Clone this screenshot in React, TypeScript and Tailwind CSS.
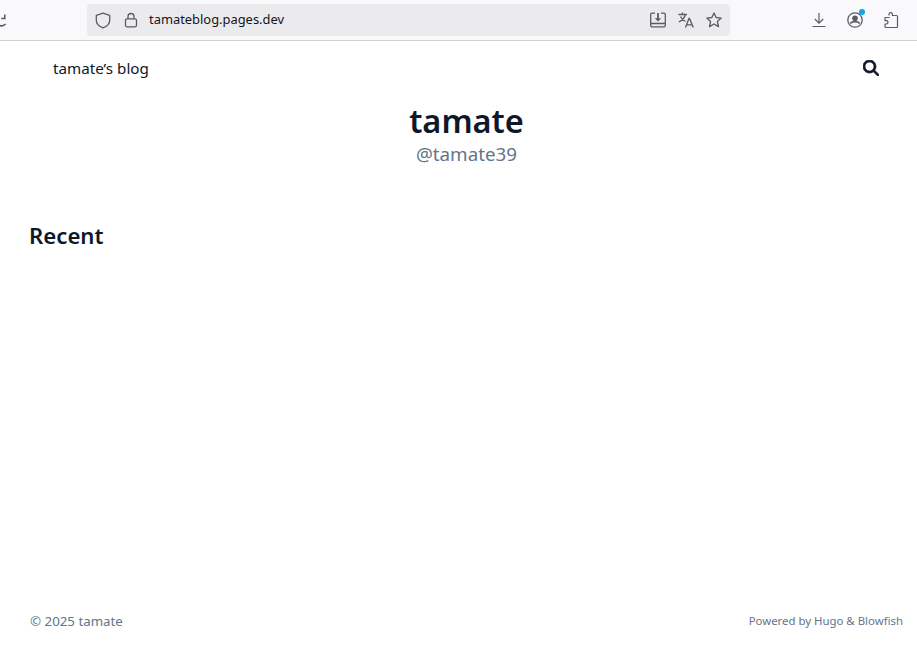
const SANS = 'font-["Noto_Sans","Open_Sans",sans-serif]';

function Toolbar() {
  return (
    <div className="relative flex h-[41px] items-center border-b border-[#cfcfd1] bg-[#f9f9fb] font-['Noto_Sans',sans-serif]">
      <svg width="8" height="18" viewBox="0 0 8 18" className="shrink-0 text-[#5b5b66]" fill="none" stroke="currentColor" strokeWidth="1.600">
        <path d="M-4 9a5.500 5.500 0 0 0 9 4.500l-.5-.500M4.800 3.500v4h-3.500" />
      </svg>
      <div className="ml-[79px] flex h-8 w-[643px] items-center rounded-[4px] bg-[#ebebed] pl-2 pr-[8px]">
        <svg width="16" height="17" viewBox="0 0 16 17" fill="none" stroke="#5b5b66" strokeWidth="1.300">
          <path d="M8 1.200 14.700 3.300v5c0 3.700-2.700 6.200-6.700 7.500-4-1.300-6.700-3.800-6.700-7.500v-5z" strokeLinejoin="round" />
        </svg>
        <svg className="ml-[13px]" width="14" height="16" viewBox="0 0 14 16" fill="none" stroke="#5b5b66" strokeWidth="1.300">
          <rect x="1.500" y="6.800" width="11" height="8" rx="1.500" />
          <path d="M4 6.800V4.500a3 3 0 0 1 6 0v2.300" />
        </svg>
        <span className="ml-[11px] text-[12.900px] text-[#15141a]">tamateblog.pages.dev</span>
        <div className="ml-auto flex items-center gap-[12px]">
          <svg width="16" height="16" viewBox="0 0 16 16" fill="none" stroke="#5b5b66" strokeWidth="1.300">
            <path d="M5 1.200H2a1.300 1.300 0 0 0-1.300 1.300v11a1.300 1.300 0 0 0 1.300 1.300h12a1.300 1.300 0 0 0 1.300-1.300v-11A1.300 1.300 0 0 0 14 1.200h-3M1 11.500h14" />
            <path d="M8 1v6.500" strokeWidth="1.800" />
            <path d="M4.800 6.300h6.400L8 9.500z" fill="#5b5b66" stroke="none" />
          </svg>
          <svg width="16" height="16" viewBox="0 0 16 16" fill="none" stroke="#5b5b66" strokeWidth="1.300">
            <path d="M.500 2.500h8.500M4.500 .500v2M7.500 2.500C6.500 6 4 8.500.800 10M2.500 4.500c1 2.300 3 4 5 5" />
            <path d="M7.500 15.500 11 6.500h.500l3.800 9M8.700 12.800h5.500" />
          </svg>
          <svg width="16" height="16" viewBox="0 0 16 16" fill="none" stroke="#5b5b66" strokeWidth="1.300" strokeLinejoin="round">
            <path d="M8 .900 10.100 5.500 15.200 6.100 11.400 9.500 12.500 14.600 8 12 3.500 14.600 4.600 9.500 .800 6.100 5.900 5.500z" />
          </svg>
        </div>
      </div>
      <div className="ml-[81px] flex items-center gap-[20px]">
        <svg width="16" height="16" viewBox="0 0 16 16" fill="none" stroke="#5b5b66" strokeWidth="1.200">
          <path d="M8 1v10M3.800 7 8 11.200 12.200 7M1.500 14.500h13" />
        </svg>
        <div className="relative h-4 w-4">
          <svg width="16" height="16" viewBox="0 0 16 16" fill="none" stroke="#5b5b66" strokeWidth="1.300">
            <circle cx="8" cy="8" r="7.200" />
            <circle cx="8" cy="6.300" r="2.800" fill="#5b5b66" stroke="none" />
            <path d="M3.300 11.500c1-1.300 2.800-1.800 4.700-1.800s3.700.5 4.700 1.800" strokeWidth="1.800" />
          </svg>
          <span className="absolute -top-[3px] -right-[2px] h-[6px] w-[6px] rounded-full bg-[#0ea5e9]" />
        </div>
        <svg width="16" height="16" viewBox="0 0 16 16" fill="none" stroke="#5b5b66" strokeWidth="1.200" strokeLinejoin="round">
          <path d="M6 3.500V2.300a1.700 1.700 0 0 1 3.400 0v1.200h4.100a1 1 0 0 1 1 1v10a1 1 0 0 1-1 1H3a1 1 0 0 1-1-1V12h1.300a1.700 1.700 0 0 0 0-3.400H2V5.500h4.700" />
        </svg>
      </div>
    </div>
  );
}

export default function App() {
  return (
    <div className={`flex h-[666px] w-[917px] flex-col overflow-hidden bg-white ${SANS}`}>
      <Toolbar />

      <nav className="flex h-[54px] items-center justify-between pl-[53px] pr-[38px]">
        <span className="text-[15.200px] text-[#0f172a]">tamate’s blog</span>
        <svg width="16" height="16" viewBox="0 0 512 512" fill="#0f172a">
          <path d="M416 208c0 45.900-14.900 88.300-40 122.700L502.600 457.400c12.500 12.500 12.500 32.800 0 45.300s-32.800 12.500-45.300 0L330.700 376c-34.400 25.200-76.800 40-122.700 40C93.100 416 0 322.900 0 208S93.100 0 208 0S416 93.100 416 208zM208 352a144 144 0 1 0 0-288 144 144 0 1 0 0 288z" stroke="#0f172a" strokeWidth="24" />
        </svg>
      </nav>

      <header className="flex flex-col items-center pt-[6px] pl-[16px]">
        <h1 className="text-[32.500px] leading-[40px] font-semibold text-[#0f172a]">tamate</h1>
        <p className="text-[18.800px] leading-[27px] text-[#64748b]">@tamate39</p>
      </header>

      <h2 className="mt-[51px] pl-[29px] text-[22.200px] leading-[34px] font-semibold text-[#0f172a]">Recent</h2>

      <footer className="mt-auto mb-[34px] flex items-center justify-between pr-[14px] pl-[30px] text-[#64748b]">
        <span className="text-[13.300px]">© 2025 tamate</span>
        <span className="pb-[3px] text-[11.400px]">Powered by Hugo &amp; Blowfish</span>
      </footer>
    </div>
  );
}
